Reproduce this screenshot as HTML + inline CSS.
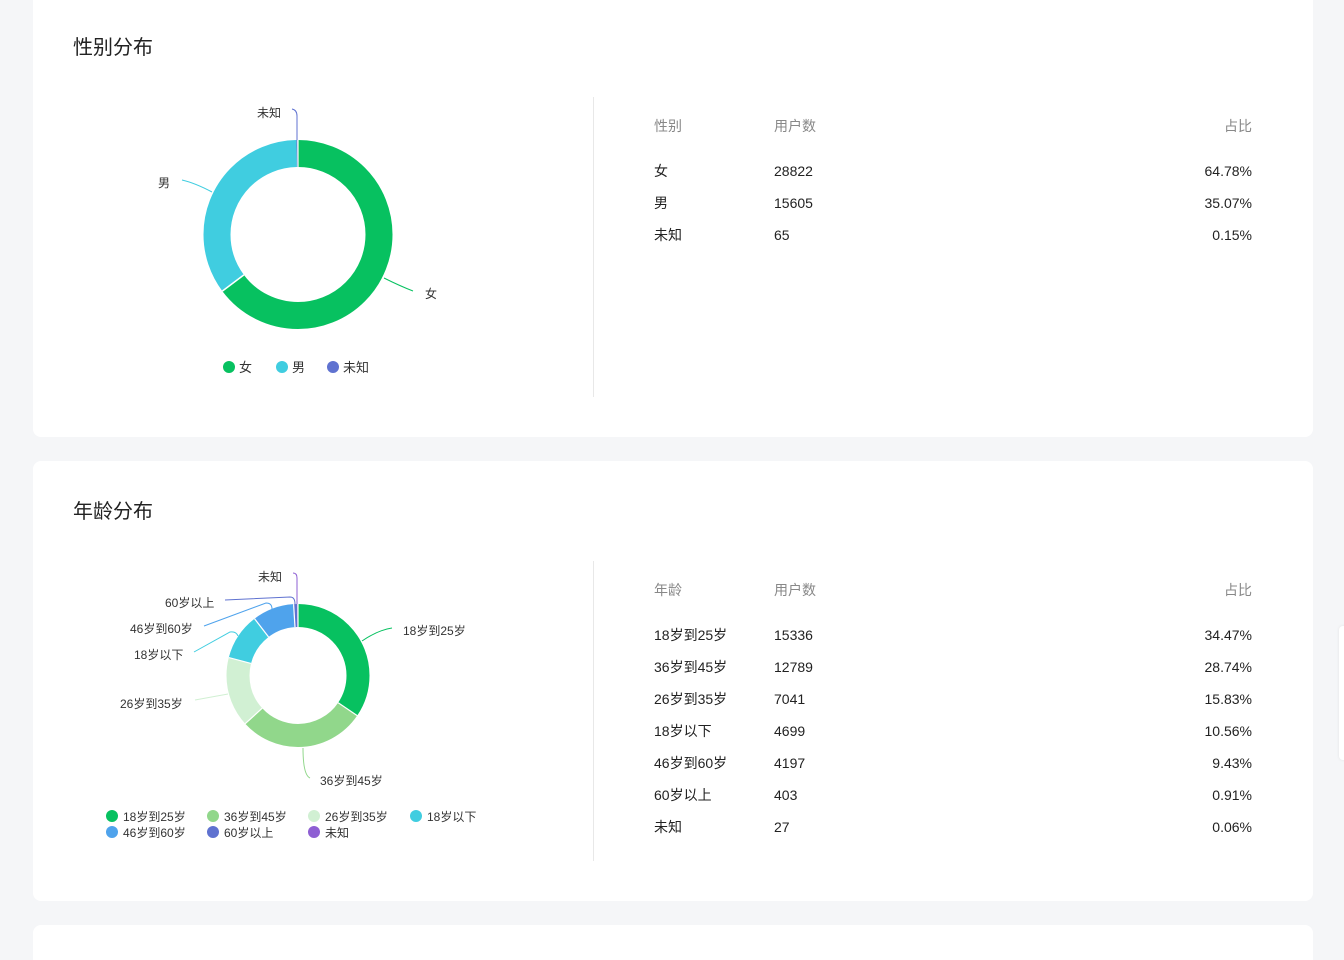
<!DOCTYPE html>
<html style="height:960px;overflow:hidden"><head><meta charset="utf-8"><style>
*{margin:0;padding:0;box-sizing:border-box}
body{width:1344px;height:960px;background:#f5f6f8;position:relative;overflow:hidden;font-family:"Liberation Sans","Noto Sans CJK SC",sans-serif;color:#222}
.card{position:absolute;left:33px;width:1280px;background:#fff;border-radius:8px}
.t{position:absolute;left:40px;font-size:20px;color:#222}
.div{position:absolute;left:560px;width:1px;background:#e8e8e8}
.r{position:absolute;font-size:14px;color:#222;line-height:16px}
.h{color:#888}
.rt{text-align:right;width:100px}
svg{position:absolute;left:0;top:0}
svg text{font-family:"Liberation Sans","Noto Sans CJK SC",sans-serif;font-size:12px;fill:#333}
</style></head><body>
<div class="card" style="top:-10px;height:447px">
<div class="t" style="top:41px">性别分布</div>
<div class="div" style="top:107px;height:300px"></div>
<div class="r h" style="left:621px;top:128px">性别</div><div class="r h" style="left:741px;top:128px">用户数</div><div class="r h rt" style="left:1119px;top:128px">占比</div>
<div class="r" style="left:621px;top:173px">女</div><div class="r" style="left:741px;top:173px">28822</div><div class="r rt" style="left:1119px;top:173px">64.78%</div>
<div class="r" style="left:621px;top:205px">男</div><div class="r" style="left:741px;top:205px">15605</div><div class="r rt" style="left:1119px;top:205px">35.07%</div>
<div class="r" style="left:621px;top:237px">未知</div><div class="r" style="left:741px;top:237px">65</div><div class="r rt" style="left:1119px;top:237px">0.15%</div>
</div>
<div class="card" style="top:461px;height:440px">
<div class="t" style="top:34px">年龄分布</div>
<div class="div" style="top:100px;height:300px"></div>
<div class="r h" style="left:621px;top:121px">年龄</div><div class="r h" style="left:741px;top:121px">用户数</div><div class="r h rt" style="left:1119px;top:121px">占比</div>
<div class="r" style="left:621px;top:166px">18岁到25岁</div><div class="r" style="left:741px;top:166px">15336</div><div class="r rt" style="left:1119px;top:166px">34.47%</div>
<div class="r" style="left:621px;top:198px">36岁到45岁</div><div class="r" style="left:741px;top:198px">12789</div><div class="r rt" style="left:1119px;top:198px">28.74%</div>
<div class="r" style="left:621px;top:230px">26岁到35岁</div><div class="r" style="left:741px;top:230px">7041</div><div class="r rt" style="left:1119px;top:230px">15.83%</div>
<div class="r" style="left:621px;top:262px">18岁以下</div><div class="r" style="left:741px;top:262px">4699</div><div class="r rt" style="left:1119px;top:262px">10.56%</div>
<div class="r" style="left:621px;top:294px">46岁到60岁</div><div class="r" style="left:741px;top:294px">4197</div><div class="r rt" style="left:1119px;top:294px">9.43%</div>
<div class="r" style="left:621px;top:326px">60岁以上</div><div class="r" style="left:741px;top:326px">403</div><div class="r rt" style="left:1119px;top:326px">0.91%</div>
<div class="r" style="left:621px;top:358px">未知</div><div class="r" style="left:741px;top:358px">27</div><div class="r rt" style="left:1119px;top:358px">0.06%</div>
</div>
<div class="card" style="top:925px;height:35px;border-radius:8px 8px 0 0"></div>
<div style="position:absolute;left:1339px;top:626px;width:10px;height:134px;background:#fff;border-radius:4px;box-shadow:0 0 3px rgba(0,0,0,.08)"></div>
<svg width="1344" height="960" viewBox="0 0 1344 960">
<g transform="rotate(-90 298 234.5)" fill="none" stroke-width="27">
<circle cx="298" cy="234.5" r="81" pathLength="100" stroke="#07c160" stroke-dasharray="64.78 100"/>
<circle cx="298" cy="234.5" r="81" pathLength="100" stroke="#40cde0" stroke-dasharray="0 64.78 35.07 100"/>
<circle cx="298" cy="234.5" r="81" pathLength="100" stroke="#5f72d0" stroke-dasharray="0 99.85 0.15 100"/>
</g>
<line x1="298" y1="140" x2="298" y2="168" stroke="#fff" stroke-width="1.2"/>
<line x1="222.3" y1="291.1" x2="243.9" y2="274.9" stroke="#fff" stroke-width="1.5"/>
<path d="M384 278 Q400 286 413 291" stroke="#07c160" fill="none"/>
<path d="M212 192 Q195 183 182 180" stroke="#40cde0" fill="none"/>
<path d="M297 140 L297 116 Q297 110 292 109" stroke="#5f72d0" fill="none"/>
<text x="425" y="298">女</text><text x="158" y="187">男</text><text x="257" y="117">未知</text>
<circle cx="229" cy="367" r="6" fill="#07c160"/><text x="239" y="372" style="font-size:13px">女</text>
<circle cx="282" cy="367" r="6" fill="#40cde0"/><text x="292" y="372" style="font-size:13px">男</text>
<circle cx="333" cy="367" r="6" fill="#5f72d0"/><text x="343" y="372" style="font-size:13px">未知</text>

<g transform="rotate(-90 298 675.5)" fill="none" stroke-width="23">
<circle cx="298" cy="675.5" r="60" pathLength="100" stroke="#07c160" stroke-dasharray="34.47 100"/>
<circle cx="298" cy="675.5" r="60" pathLength="100" stroke="#91d78b" stroke-dasharray="0 34.47 28.74 100"/>
<circle cx="298" cy="675.5" r="60" pathLength="100" stroke="#d1f0d3" stroke-dasharray="0 63.21 15.83 100"/>
<circle cx="298" cy="675.5" r="60" pathLength="100" stroke="#40cde0" stroke-dasharray="0 79.04 10.56 100"/>
<circle cx="298" cy="675.5" r="60" pathLength="100" stroke="#4fa3ec" stroke-dasharray="0 89.6 9.43 100"/>
<circle cx="298" cy="675.5" r="60" pathLength="100" stroke="#5f72d0" stroke-dasharray="0 99.03 0.91 100"/>
<circle cx="298" cy="675.5" r="60" pathLength="100" stroke="#8e5fd3" stroke-dasharray="0 99.94 0.06 100"/>
</g>
<g stroke="#fff" stroke-width="1.2">
<line x1="298" y1="603" x2="298" y2="628"/>
<line x1="357.2" y1="715.6" x2="338.2" y2="702.7"/>
<line x1="245.2" y1="723.7" x2="262.2" y2="708.2"/>
<line x1="228.8" y1="657.6" x2="251" y2="663.4"/>
<line x1="254.6" y1="618.7" x2="268.6" y2="637"/>
<line x1="293.6" y1="604.1" x2="295" y2="627"/>
</g>
<g fill="none" stroke-width="1">
<path d="M362 641 Q378 630 392 628" stroke="#07c160"/>
<path d="M303 748 Q303 775 310 778" stroke="#91d78b"/>
<path d="M228 694 L195 700" stroke="#d1f0d3"/>
<path d="M238 636 Q236 631 230 632 L194 652" stroke="#40cde0"/>
<path d="M272 609 Q272 603 266 603 L204 626" stroke="#4fa3ec"/>
<path d="M295 604 Q295 597 290 597 L225 600" stroke="#5f72d0"/>
<path d="M297 604 L297 578 Q297 573 293 573" stroke="#8e5fd3"/>
</g>
<text x="403" y="635">18岁到25岁</text><text x="320" y="785">36岁到45岁</text><text x="120" y="708">26岁到35岁</text>
<text x="134" y="659">18岁以下</text><text x="130" y="633">46岁到60岁</text><text x="165" y="607">60岁以上</text><text x="258" y="581">未知</text>
<circle cx="112" cy="816" r="6" fill="#07c160"/><text x="123" y="821">18岁到25岁</text>
<circle cx="213" cy="816" r="6" fill="#91d78b"/><text x="224" y="821">36岁到45岁</text>
<circle cx="314" cy="816" r="6" fill="#d1f0d3"/><text x="325" y="821">26岁到35岁</text>
<circle cx="416" cy="816" r="6" fill="#40cde0"/><text x="427" y="821">18岁以下</text>
<circle cx="112" cy="832" r="6" fill="#4fa3ec"/><text x="123" y="837">46岁到60岁</text>
<circle cx="213" cy="832" r="6" fill="#5f72d0"/><text x="224" y="837">60岁以上</text>
<circle cx="314" cy="832" r="6" fill="#8e5fd3"/><text x="325" y="837">未知</text>
</svg>
</body></html>
